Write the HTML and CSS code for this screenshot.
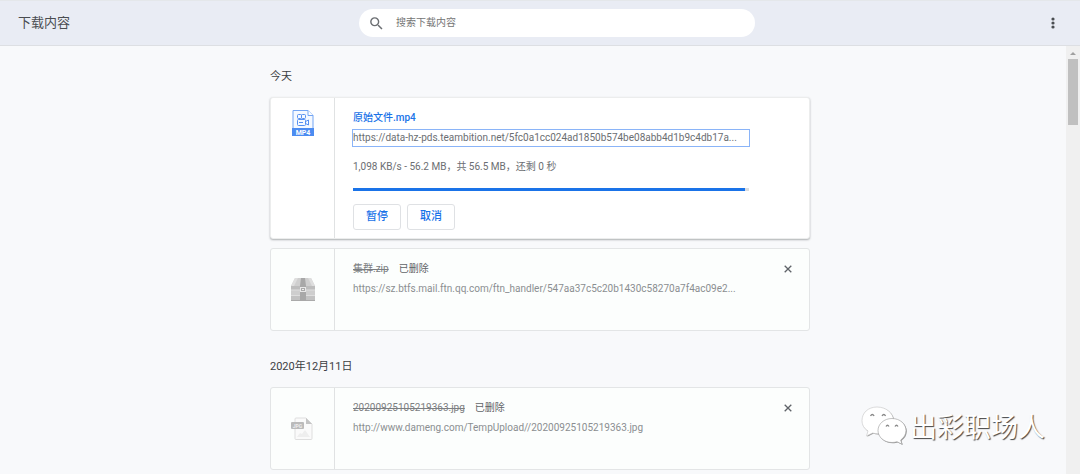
FILE: index.html
```html
<!DOCTYPE html>
<html lang="zh-CN">
<head>
<meta charset="utf-8">
<meta name="viewport" content="width=device-width, initial-scale=1">
<title>下载内容</title>
<link rel="stylesheet" href="styles.css">
</head>
<body>
<header class="toolbar">
  <h1 class="title">下载内容</h1>
  <label class="search">
    <svg class="search-icon" viewBox="0 0 24 24" aria-hidden="true"><path d="M15.5 14h-.79l-.28-.27A6.47 6.47 0 0 0 16 9.5 6.5 6.5 0 1 0 9.5 16c1.61 0 3.09-.59 4.23-1.57l.27.28v.79l5 4.99L20.49 19l-4.99-5zm-6 0C7.01 14 5 11.99 5 9.500S7.010 5 9.500 5 14 7.010 14 9.500 11.990 14 9.500 14z"/></svg>
    <input class="search-input" type="search" placeholder="搜索下载内容" aria-label="搜索下载内容">
  </label>
  <button class="menu" type="button" aria-label="更多操作">
    <svg class="menu-icon" viewBox="0 0 16 16"><circle cx="8" cy="4" r="1.600"/><circle cx="8" cy="8" r="1.600"/><circle cx="8" cy="12" r="1.600"/></svg>
  </button>
</header>
<div class="viewport">
  <main class="downloads">
    <section class="group">
      <h2 class="date">今天</h2>
      <article class="card active">
        <div class="file-icon">
          <svg class="icon-mp4" viewBox="0 0 22 26" aria-hidden="true">
            <path d="M1 .5h15l5 5V25H1z" fill="#f5f9ff" stroke="#73a5f4"/>
            <path d="M16 .5v5h5" fill="#fff" stroke="#73a5f4"/>
            <g fill="none" stroke="#5590f2"><rect x="5.500" y="4.500" width="4" height="4" rx="1"/><rect x="9.500" y="4.500" width="4" height="4" rx="1"/><rect x="5.500" y="9.500" width="8" height="6" rx="1"/><path d="M13.500 11.500l3-1.500v5l-3-1.500M7 12.500h4"/></g>
            <path d="M0 18h22v8H0z" fill="#4c8cf1"/>
            <text class="badge-mp4" x="11" y="25" text-anchor="middle">MP4</text>
          </svg>
        </div>
        <div class="details">
          <div class="heading"><a class="name" href="#">原始文件.mp4</a></div>
          <a class="url focused" href="#">https://data-hz-pds.teambition.net/5fc0a1cc024ad1850b574be08abb4d1b9c4db17a...</a>
          <p class="status">1,098 KB/s - 56.2 MB，共 56.5 MB，还剩 0 秒</p>
          <progress class="progress" value="99" max="100" aria-label="下载进度"></progress>
          <div class="actions">
            <button class="action" type="button">暂停</button>
            <button class="action" type="button">取消</button>
          </div>
        </div>
      </article>
      <article class="card">
        <div class="file-icon">
          <svg class="icon-zip" viewBox="0 0 24 24" aria-hidden="true">
            <path d="M4 0h16l4 8H0z" fill="#cfcfcf"/><path d="M4 0h3L3 8H0zM20 0h-3l4 8h3z" fill="#dedede"/>
            <path d="M0 8h24v4H0z" fill="#bdbdbd"/><path d="M0 12h24v5H0z" fill="#cecece"/><path d="M0 17h24v6H0z" fill="#c2c2c2"/>
            <path d="M0 12h24M0 17.500h24" stroke="#dedede"/><path d="M0 22.500h24" stroke="#aaa"/>
            <path d="M10 0h4l1 8v15H9V8z" fill="#a8a8a8"/>
            <rect x="9.500" y="9.500" width="5" height="4" fill="#aaa" stroke="#e8e8e8"/><path d="M11 12l1-1 1 1" fill="none" stroke="#eee"/>
          </svg>
        </div>
        <div class="details">
          <div class="heading"><span class="name removed">集群.zip</span><span class="state">已删除</span></div>
          <a class="url" href="#">https://sz.btfs.mail.ftn.qq.com/ftn_handler/547aa37c5c20b1430c58270a7f4ac09e2...</a>
        </div>
        <button class="close" type="button" aria-label="从列表中移除"><svg class="close-icon" viewBox="0 0 8 8"><path d="M.7.7l6.600 6.600M7.300.7L.7 7.300"/></svg></button>
      </article>
    </section>
    <section class="group">
      <h2 class="date">2020年12月11日</h2>
      <article class="card">
        <div class="file-icon">
          <svg class="icon-jpg" viewBox="0 0 24 24" aria-hidden="true">
            <path d="M5 1h10l6 6v14.500q0 1-1 1H5q-1 0-1-1V2q0-1 1-1z" fill="#fafafa" stroke="#dedede"/>
            <path d="M15 1l6 6h-6z" fill="#c4c4c4"/>
            <path d="M6 20l3-4 2 1 3-4 5 7z" fill="#eee"/>
            <rect y="5" width="13" height="7" rx="1" fill="#bbb"/>
            <text class="badge-jpg" x="6.500" y="11" text-anchor="middle">JPG</text>
          </svg>
        </div>
        <div class="details">
          <div class="heading"><span class="name removed">20200925105219363.jpg</span><span class="state">已删除</span></div>
          <a class="url" href="#">http://www.dameng.com/TempUpload//20200925105219363.jpg</a>
        </div>
        <button class="close" type="button" aria-label="从列表中移除"><svg class="close-icon" viewBox="0 0 8 8"><path d="M.7.7l6.600 6.600M7.300.7L.7 7.300"/></svg></button>
      </article>
    </section>
  </main>
  <div class="scrollbar" aria-hidden="true"><span class="arrow"></span><span class="thumb"></span></div>
  <div class="watermark">
    <svg class="wechat" viewBox="0 0 46 40" aria-hidden="true">
      <g fill="#999" transform="translate(.8 .8)">
        <path d="M16 1C7 1 1 7 1 14.500c0 4.500 2 8 6 10.500l-1.500 5 6-3c2 .6 4 .8 6 .7 8-.4 15-5.700 15-13.200S25 1 16 1z"/>
        <path d="M31 12.500c-8 0-14 5.500-14 12s6 12 14 12c2 0 3.500-.3 5-.8l5 2.500-1.300-4.200c3.300-2.300 5.300-5.500 5.300-9.500 0-6.500-6-12-14-12z"/>
      </g>
      <g fill="#fff" stroke="#c4c4c4" stroke-width=".6">
        <path d="M16 1C7 1 1 7 1 14.500c0 4.500 2 8 6 10.500l-1.500 5 6-3c2 .6 4 .8 6 .7 8-.4 15-5.700 15-13.200S25 1 16 1z"/>
        <path d="M31 12.500c-8 0-14 5.500-14 12s6 12 14 12c2 0 3.500-.3 5-.8l5 2.500-1.300-4.200c3.300-2.300 5.300-5.500 5.300-9.500 0-6.500-6-12-14-12z" stroke="#999"/>
      </g>
      <g fill="none" stroke="#888" stroke-width="1.300"><path d="M9.500 10q1.800-3 3.600 0M21 10q1.800-3 3.600 0M25 20.500q1.500-2.500 3 0M34 20.500q1.500-2.500 3 0"/></g>
    </svg>
    <span class="watermark-text">出彩职场人</span>
  </div>
</div>
</body>
</html>
```
FILE: styles.css
```css
* { box-sizing: border-box; }

body {
  margin: 0;
  height: 100vh;
  display: flex;
  flex-direction: column;
  overflow: hidden;
  background: #f8f9fb;
  color: #3c4043;
  font: 10px/16px Roboto, "Noto Sans CJK SC", sans-serif;
}

h1, h2, p { margin: 0; font-weight: 400; }
a { color: inherit; text-decoration: none; }
button, input { font: inherit; }

.toolbar {
  display: grid;
  grid-template-columns: 34px 1fr minmax(0, 396px) 1fr;
  align-items: center;
  padding: 8px 18px;
  background: #e9ecf4;
  border-top: 1px solid #e4e7ea;
  border-bottom: 1px solid #dddfe3;
}
.title { grid-column: 1 / 3; font-size: 13px; color: #4a4d51; }
.search {
  display: flex;
  align-items: center;
  height: 28px;
  padding: 0 12px 0 9px;
  gap: 11px;
  background: #fff;
  border-radius: 14px;
}
.search-icon { width: 17px; height: 17px; flex: none; fill: #6b6e72; }
.search-input {
  flex: 1;
  min-width: 0;
  padding: 0;
  border: 0;
  outline: 0;
  background: none;
}
.search-input::placeholder { color: #757575; opacity: 1; }
.menu {
  justify-self: end;
  display: flex;
  padding: 0;
  border: 0;
  background: none;
}
.menu-icon { width: 18px; height: 16px; fill: #4a4d51; }

.viewport { position: relative; flex: 1; min-height: 0; overflow: hidden; }
.downloads { max-width: 540px; margin: 0 auto; padding-top: 22px; }
.group { display: flex; flex-direction: column; gap: 9px; margin-bottom: 27px; }
.date { font-size: 11px; line-height: 17px; padding-bottom: 3px; color: #3c4043; }

.card {
  position: relative;
  display: flex;
  min-height: 83px;
  background: #fcfefd;
  border: 1px solid #e3e5e6;
  border-radius: 3px;
  color: #8b8e91;
}
.active {
  min-height: 142px;
  background: #fff;
  border-color: #eceded;
  box-shadow: 0 1px 2px rgba(60, 64, 67, .4);
  color: #6b6e72;
}
.file-icon {
  flex: none;
  width: 64px;
  display: flex;
  justify-content: center;
  align-items: center;
  border-right: 1px solid #e0e2e3;
}
.active .file-icon { align-items: flex-start; padding-top: 12px; }
.icon-mp4 { width: 22px; height: 26px; }
.icon-zip, .icon-jpg { width: 24px; height: 24px; }
.badge-mp4 { font: 700 7px Roboto, sans-serif; fill: #fff; }
.badge-jpg { font: 700 5px Roboto, sans-serif; fill: #eee; }

.details { flex: 1; min-width: 0; padding: 12px 60px 8px 18px; }
.heading { display: flex; gap: 10px; margin-bottom: 4px; }
.name { color: #1a73e8; font-weight: 500; }
.removed { color: #7c7f82; font-weight: 400; text-decoration: line-through; }
.state { color: #5f6368; }
.url {
  display: block;
  overflow: hidden;
  white-space: nowrap;
  text-overflow: ellipsis;
}
.focused { outline: 1px solid #8ab4f8; }
.status { margin: 13px 0; }
.progress {
  display: block;
  appearance: none;
  width: 100%;
  height: 3px;
  border: 0;
  background: #dadce0;
}
.progress::-webkit-progress-bar { background: #dadce0; }
.progress::-webkit-progress-value { background: #1a73e8; }
.actions { display: flex; gap: 6px; margin-top: 13px; }
.action {
  width: 48px;
  height: 26px;
  padding: 0;
  background: #fff;
  border: 1px solid #dfe1e4;
  border-radius: 3px;
  color: #1a73e8;
  font-size: 11px;
  font-weight: 500;
}
.close {
  position: absolute;
  top: 12px;
  right: 13px;
  display: flex;
  padding: 4px;
  border: 0;
  background: none;
}
.close-icon { width: 8px; height: 8px; fill: none; stroke: #5f6368; stroke-width: 1.3; }

.scrollbar {
  position: absolute;
  inset: 0 0 0 auto;
  width: 14px;
  display: flex;
  flex-direction: column;
  align-items: center;
  background: #f0f0f0;
}
.arrow {
  margin: 6px 0 4px;
  border: 3px solid transparent;
  border-top: 0;
  border-bottom: 3px solid #a0a0a0;
}
.thumb { width: 10px; height: 66px; background: #c0c0c0; }

.watermark {
  position: absolute;
  right: 35px;
  bottom: 28px;
  display: flex;
  align-items: center;
  gap: 3px;
}
.wechat { width: 46px; height: 40px; }
.watermark-text {
  font: 27px/40px "Noto Sans CJK SC", sans-serif;
  color: #fff;
  text-shadow: 1px 1px 1px #444;
}
```
